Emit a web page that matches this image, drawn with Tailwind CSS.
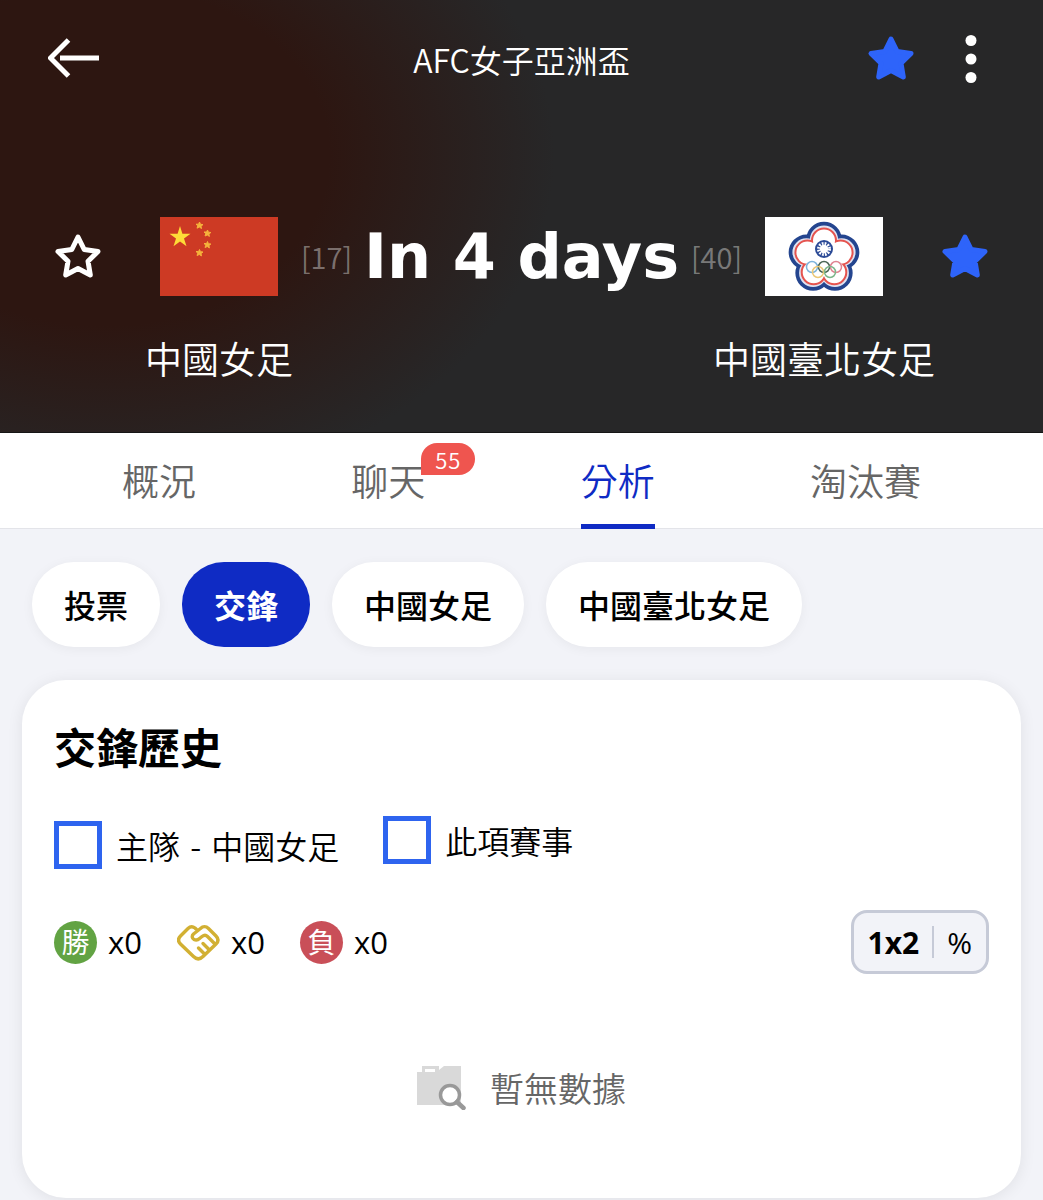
<!DOCTYPE html>
<html lang="zh-Hant">
<head>
  <meta charset="UTF-8" />
  <meta name="viewport" content="width=device-width, initial-scale=1.0"/>
  <title>AFC女子亞洲盃 - 分析</title>

  <!-- Tailwind CSS -->
  <script src="https://cdn.jsdelivr.net/npm/@tailwindcss/browser@4"></script>
</head>

<body class="min-h-screen bg-[#f2f3f8] text-black font-['Noto_Sans_CJK_TC',sans-serif]">

  <!-- Shared star shape -->
  <svg class="hidden">
    <symbol id="star" viewBox="0 0 48 48">
      <path d="M24 4L30.2 16.5L44 18.5L34 28.2L36.3 42L24 35.5L11.7 42L14 28.2L4 18.5L17.8 16.5Z" stroke-width="5" stroke-linejoin="round"/>
    </symbol>
  </svg>

  <!-- ==================== HEADER ==================== -->
  <header class="bg-[#272728] bg-[radial-gradient(ellipse_450px_340px_at_10%_36%,#2d1611_0%,#2d1611_50%,#272728_100%)] pb-11 text-white border-b border-[#161616]">

    <!-- Top bar -->
    <div class="grid grid-cols-[1fr_auto_1fr] items-center h-[118px] px-12">
      <a href="#" aria-label="返回" class="justify-self-start">
        <svg class="w-13 h-11" viewBox="0 0 52 44" fill="none" stroke="currentColor" stroke-width="5">
          <path d="M20.500 3L2.500 21L20.500 39M12 21H51"/>
        </svg>
      </a>
      <h1 class="text-[32px] font-[350]">AFC女子亞洲盃</h1>
      <div class="flex items-center justify-self-end gap-8">
        <button type="button" aria-label="收藏賽事">
          <svg class="w-12 h-12 text-[#2e64fa]" fill="currentColor" stroke="currentColor"><use href="#star"/></svg>
        </button>
        <button type="button" aria-label="更多" class="w-12">
          <svg class="w-3 h-12 mx-auto" viewBox="0 0 12 48" fill="currentColor">
            <circle cx="6" cy="5.500" r="5.500"/>
            <circle cx="6" cy="24" r="5.500"/>
            <circle cx="6" cy="42.500" r="5.500"/>
          </svg>
        </button>
      </div>
    </div>

    <!-- Teams -->
    <div class="grid grid-cols-[156px_126px_1fr_126px_156px] pt-[99px]">
      <button type="button" aria-label="收藏中國女足" class="h-[79px] flex items-center justify-center">
        <svg class="w-12 h-12" fill="none" stroke="currentColor"><use href="#star"/></svg>
      </button>

      <div class="flex flex-col items-center gap-8">
        <svg class="w-[118px] h-[79px]" viewBox="0 0 118 79" aria-label="中國">
          <rect width="118" height="79" fill="#cd3a24"/>
          <path fill="#fedb38" d="M20 9L22.400 16.700H30.500L24 21.400L26.500 29.200L20 24.400L13.500 29.200L16 21.400L9.500 16.700H17.600Z"/>
          <g fill="#f5b23c" stroke="#f5b23c" stroke-width="1" stroke-linejoin="round">
            <path d="M39.500 5L40.500 7.300L43 7.600L41 9.200L41.500 11.500L39.300 10L37 11.200L37.800 8.800L36 7.200L38.600 7.200Z"/>
            <path d="M47.500 13L48.400 15.200L50.900 15.500L48.900 17.100L49.400 19.400L47.300 18L45 19L45.800 16.700L44 15L46.600 15Z"/>
            <path d="M47.500 24.500L48.400 26.700L50.900 27L48.900 28.600L49.400 30.900L47.300 29.500L45 30.500L45.800 28.200L44 26.500L46.600 26.500Z"/>
            <path d="M39.500 32.500L40.500 34.700L43 35L41 36.600L41.500 38.900L39.300 37.500L37 38.500L37.800 36.200L36 34.500L38.600 34.500Z"/>
          </g>
        </svg>
        <span class="text-[37px] leading-[60px] font-[350] whitespace-nowrap">中國女足</span>
      </div>

      <div class="grid grid-cols-[1fr_auto_1fr] items-center h-[79px] px-[19px] whitespace-nowrap">
        <span class="text-[29px] font-[350] text-white/40">[17]</span>
        <span class="text-[62px] leading-[79px] font-bold font-['DejaVu_Sans',sans-serif]">In 4 days</span>
        <span class="text-[29px] font-[350] text-white/40 justify-self-end">[40]</span>
      </div>

      <div class="flex flex-col items-center gap-8">
        <svg class="w-[118px] h-[79px]" viewBox="0 0 118 79" aria-label="中國臺北">
          <defs>
            <path id="lobes" d="M59 22.500h0M76.600 35.300h0M69.900 56h0M48.100 56h0M41.400 35.300h0" stroke-linecap="round"/>
            <path id="lobes-inner" d="M59 23.500h0M75.600 35.600h0M69.300 55.200h0M48.700 55.200h0M42.400 35.600h0" stroke-linecap="round"/>
          </defs>
          <rect width="118" height="79" fill="#fff"/>
          <use href="#lobes" stroke="#24458f" stroke-width="35.500"/>
          <use href="#lobes" stroke="#dfe3f2" stroke-width="28"/>
          <use href="#lobes-inner" stroke="#e5544f" stroke-width="26"/>
          <use href="#lobes-inner" stroke="#fff" stroke-width="22"/>
          <circle cx="59" cy="41" r="15" fill="#fff"/>
          <circle cx="59" cy="32" r="9" fill="#2b4a96"/>
          <circle cx="59" cy="32" r="5.500" fill="none" stroke="#fff" stroke-width="3" stroke-dasharray="1.700 1.180"/>
          <circle cx="59" cy="32" r="4.200" fill="#fff"/>
          <g fill="none" stroke-width="1.500">
            <circle cx="47" cy="50" r="5.500" stroke="#7db4dc"/>
            <circle cx="59" cy="50" r="5.500" stroke="#4b6656"/>
            <circle cx="71" cy="50" r="5.500" stroke="#e08492"/>
            <circle cx="53" cy="55" r="5.500" stroke="#ecc877"/>
            <circle cx="65" cy="55" r="5.500" stroke="#7cb78b"/>
          </g>
        </svg>
        <span class="text-[37px] leading-[60px] font-[350] whitespace-nowrap">中國臺北女足</span>
      </div>

      <button type="button" aria-label="收藏中國臺北女足" class="h-[79px] flex items-center justify-center">
        <svg class="w-12 h-12 text-[#2e64fa]" fill="currentColor" stroke="currentColor"><use href="#star"/></svg>
      </button>
    </div>
  </header>

  <!-- ==================== TABS ==================== -->
  <nav class="flex justify-between h-24 px-[122px] bg-white border-b border-[#e3e4e9] text-[37px] leading-[94px] font-[350] text-[#666]">
    <a href="#">概況</a>
    <a href="#" class="relative">聊天
      <span class="absolute top-[10px] left-full -ml-1 w-[54px] h-8 rounded-2xl rounded-bl-none bg-[#ef554f] text-white text-center text-[22px] leading-8 tracking-wider">55</span>
    </a>
    <a href="#" class="h-24 border-b-5 border-[#0f2bc4] text-[#0f2bc4]">分析</a>
    <a href="#">淘汰賽</a>
  </nav>

  <main class="px-[22px] pt-[33px]">

    <!-- Filter chips -->
    <div class="flex gap-[22px] px-[10px] text-[32px] leading-[85px] font-medium">
      <button type="button" class="px-8 rounded-[42px] bg-white shadow-[0_2px_12px_rgba(0,0,0,0.05)]">投票</button>
      <button type="button" class="px-8 rounded-[42px] bg-[#0f2bc4] text-white font-bold">交鋒</button>
      <button type="button" class="px-8 rounded-[42px] bg-white shadow-[0_2px_12px_rgba(0,0,0,0.05)]">中國女足</button>
      <button type="button" class="px-8 rounded-[42px] bg-white shadow-[0_2px_12px_rgba(0,0,0,0.05)]">中國臺北女足</button>
    </div>

    <!-- Head to head card -->
    <section class="mt-[33px] px-8 pt-[34px] pb-19 rounded-[44px] bg-white shadow-[0_2px_16px_rgba(0,0,0,0.08)]">
      <h2 class="text-[42px] leading-[64px] font-bold">交鋒歷史</h2>

      <div class="flex items-start gap-11 mt-[38px] text-[32px] font-[350]">
        <label class="flex items-center gap-[14px] leading-[58px]">
          <input type="checkbox" name="home" class="appearance-none w-12 h-12 border-5 border-[#2e64ef] checked:bg-[#2e64ef]">
          <span>主隊<span class="px-[3px]"> - </span>中國女足</span>
        </label>
        <label class="flex items-center gap-[14px] leading-[48px]">
          <input type="checkbox" name="competition" class="appearance-none w-12 h-12 border-5 border-[#2e64ef] checked:bg-[#2e64ef]">
          此項賽事
        </label>
      </div>

      <div class="flex items-center justify-between mt-9 font-['Open_Sans','Noto_Sans_CJK_TC',sans-serif]">
        <div class="flex gap-[35px] text-[31px] leading-[64px]">
          <div class="flex items-center gap-[11px]">
            <span class="w-[43px] h-[43px] rounded-full bg-[#62a343] text-white text-center text-[28px] leading-[43px]">勝</span>
            x0
          </div>
          <div class="flex items-center gap-[11px]">
            <svg class="w-[43px] h-[43px]" viewBox="0 0 43 43" fill="none" stroke="#d2b033" stroke-width="3.400" stroke-linecap="round" stroke-linejoin="round">
              <path d="M18 7C15.500 5 13 5.500 11 7.500L3.500 15C1 17.500 1 20.500 3.500 23L16.500 35.500C19.500 38.500 23 38.500 26 35.500L39 23C41.500 20.500 41.500 17.500 39 15L31.500 7.500C29 5 26 5 23.500 7.500L16.500 13C14.500 15 15 17.500 17 18.500C19 19.500 21 19 22.500 17.500L25 15.500C27 14 29 14 30.500 15.500L38 23M18 7L20 9"/>
              <path d="M26 22.500L32 28.500M21.500 27L27.500 33"/>
            </svg>
            x0
          </div>
          <div class="flex items-center gap-[11px]">
            <span class="w-[43px] h-[43px] rounded-full bg-[#c94f58] text-white text-center text-[28px] leading-[43px]">負</span>
            x0
          </div>
        </div>

        <button type="button" class="flex items-center h-16 px-[14px] border-3 border-[#c6cad7] rounded-2xl bg-[#f2f3f8] text-[30px]">
          <span class="font-bold">1x2</span>
          <span class="w-[2px] h-8 mx-[13px] bg-[#c6cad7]"></span>
          <span class="font-medium">%</span>
        </button>
      </div>

      <!-- Empty state -->
      <div class="flex items-center justify-center gap-6 mt-20 text-[34px] leading-[68px] font-[350] text-[#666]">
        <svg class="w-[49px] h-11" viewBox="0 0 49 44">
          <path fill="#d9d9d9" d="M0 6H5V0H22V4L27 0H44V39H0Z"/>
          <path fill="#fff" d="M8 3H18V6H8Z"/>
          <circle cx="33" cy="29" r="9.500" fill="#fff" stroke="#999" stroke-width="3.500"/>
          <path d="M40 36L46.500 42" stroke="#999" stroke-width="4.500" stroke-linecap="round"/>
        </svg>
        <span>暫無數據</span>
      </div>
    </section>
  </main>
</body>
</html>
